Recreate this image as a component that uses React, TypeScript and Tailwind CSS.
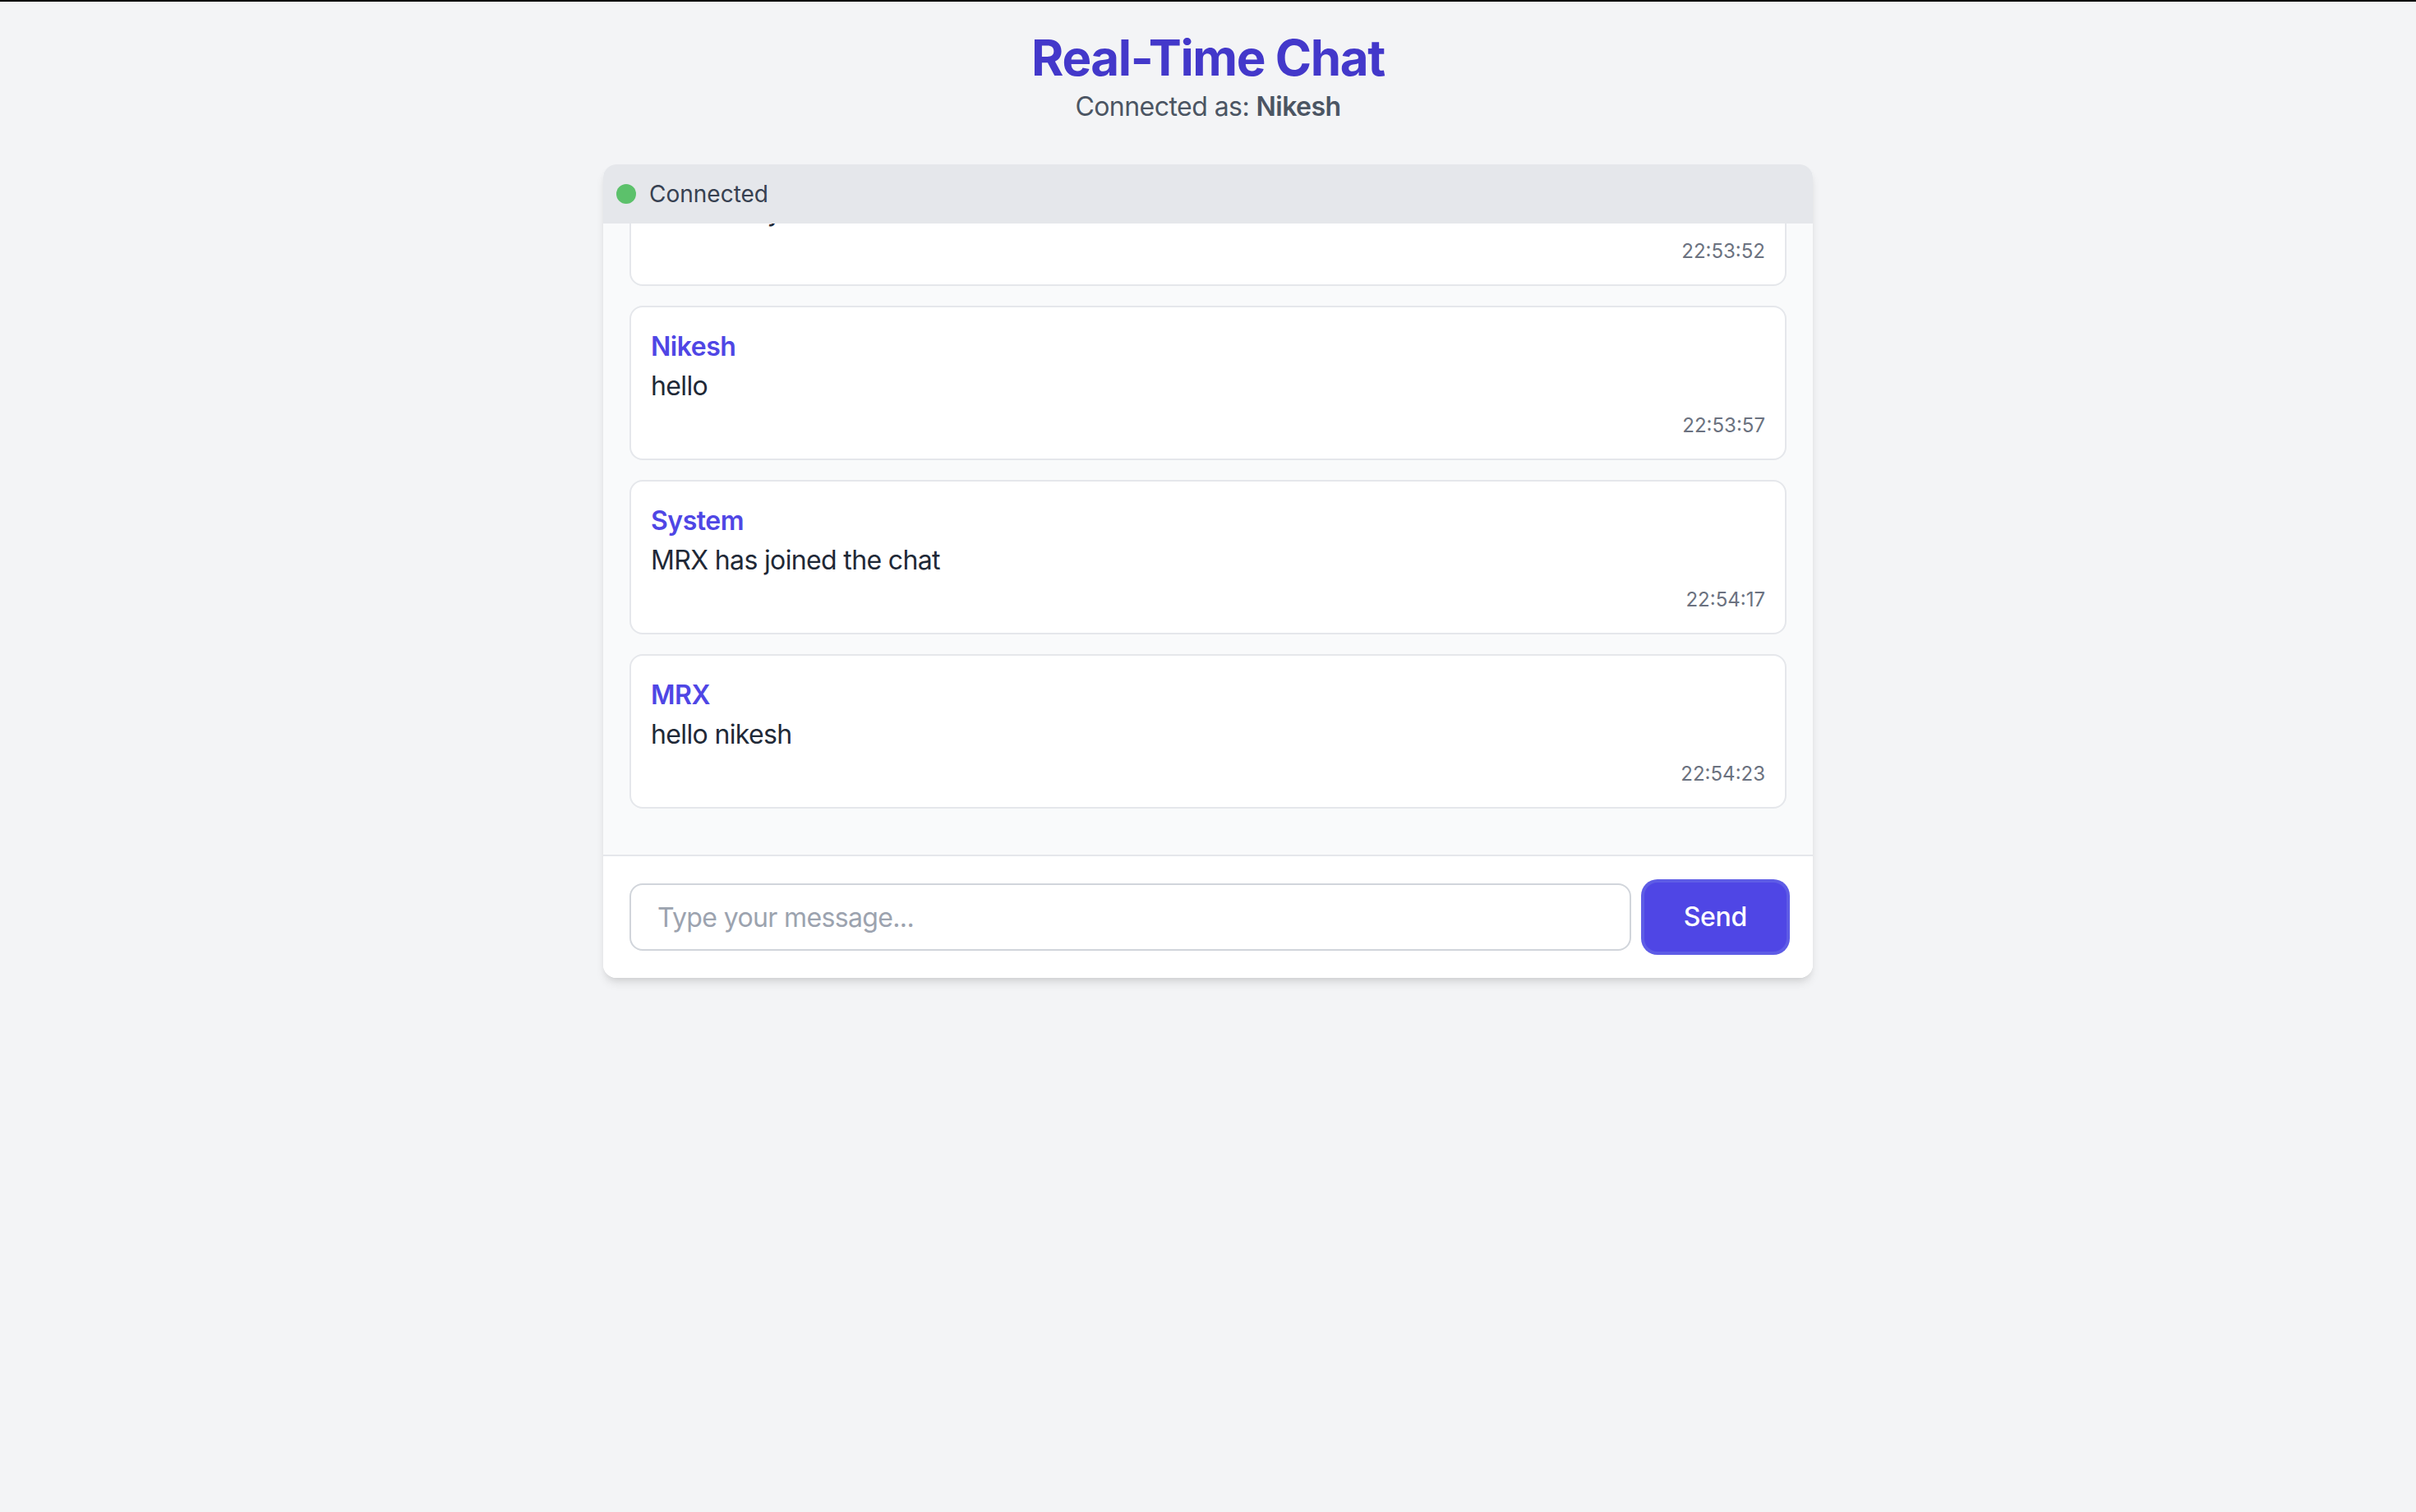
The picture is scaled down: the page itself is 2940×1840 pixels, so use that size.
import React, { useLayoutEffect, useRef } from 'react';

type Message = {
  user: string;
  text: string;
  time: string;
};

const messages: Message[] = [
  { user: 'System', text: 'hello everyone', time: '22:53:52' },
  { user: 'Nikesh', text: 'hello', time: '22:53:57' },
  { user: 'System', text: 'MRX has joined the chat', time: '22:54:17' },
  { user: 'MRX', text: 'hello nikesh', time: '22:54:23' },
];

const MessageCard: React.FC<{ message: Message }> = ({ message }) => {
  return (
    <div className="mb-[24px] rounded-[16px] border-2 border-[#e5e7eb] bg-white p-[24px]">
      <div className="text-[32px] leading-[48px] font-semibold tracking-[-0.015em] text-[#4f46e5]">{message.user}</div>
      <div className="text-[32px] leading-[48px] tracking-[-0.02em] text-[#1f2937]">{message.text}</div>
      <div className="mt-[8px] text-right text-[24px] leading-[32px] text-[#6b7280]">{message.time}</div>
    </div>
  );
};

const App: React.FC = () => {
  const listRef = useRef<HTMLDivElement>(null);

  useLayoutEffect(() => {
    if (listRef.current) {
      listRef.current.scrollTop = listRef.current.scrollHeight;
    }
  }, []);

  return (
    <div className="min-h-screen border-t-2 border-black bg-[#f3f4f6] pt-[32px] font-['Inter','Noto_Sans',sans-serif]">
      <div className="text-center">
        <h1 className="text-[60px] leading-[72px] font-bold tracking-[-0.023em] text-[#4338ca]">Real-Time Chat</h1>
        <p className="text-[32px] leading-[48px] tracking-[-0.017em] text-[#4b5563]">
          Connected as: <span className="font-semibold">Nikesh</span>
        </p>
      </div>

      <div className="mx-auto mt-[46px] w-[1472px] overflow-hidden rounded-[16px] bg-white shadow-[0_8px_12px_-2px_rgba(0,0,0,0.1),0_4px_8px_-4px_rgba(0,0,0,0.1)]">
        {/* status bar */}
        <div className="flex items-center gap-[16px] bg-[#e5e7eb] px-[16px] py-[16px]">
          <span className="h-[24px] w-[24px] rounded-full bg-[#5cc16b]" />
          <span className="text-[28px] leading-[40px] text-[#374151]">Connected</span>
        </div>

        {/* messages */}
        <div
          ref={listRef}
          className="h-[768px] overflow-y-auto bg-[#f9fafb] p-[32px] [scrollbar-width:none]"
        >
          {messages.map((m, i) => (
            <MessageCard key={i} message={m} />
          ))}
        </div>

        {/* input */}
        <div className="flex items-center gap-[16px] border-t-2 border-[#e5e7eb] bg-white p-[32px]">
          <input
            type="text"
            placeholder="Type your message..."
            className="h-[82px] flex-1 rounded-[16px] border-2 border-[#d1d5db] px-[32px] text-[32px] tracking-[-0.02em] text-[#1f2937] outline-none placeholder:text-[#9ca3af]"
          />
          <button className="rounded-[16px] bg-[#4f46e5] px-[48px] py-[18px] text-[32px] leading-[48px] font-medium tracking-[-0.01em] text-white ring-4 ring-[#5e5ce6]">
            Send
          </button>
        </div>
      </div>
    </div>
  );
};

export default App;
